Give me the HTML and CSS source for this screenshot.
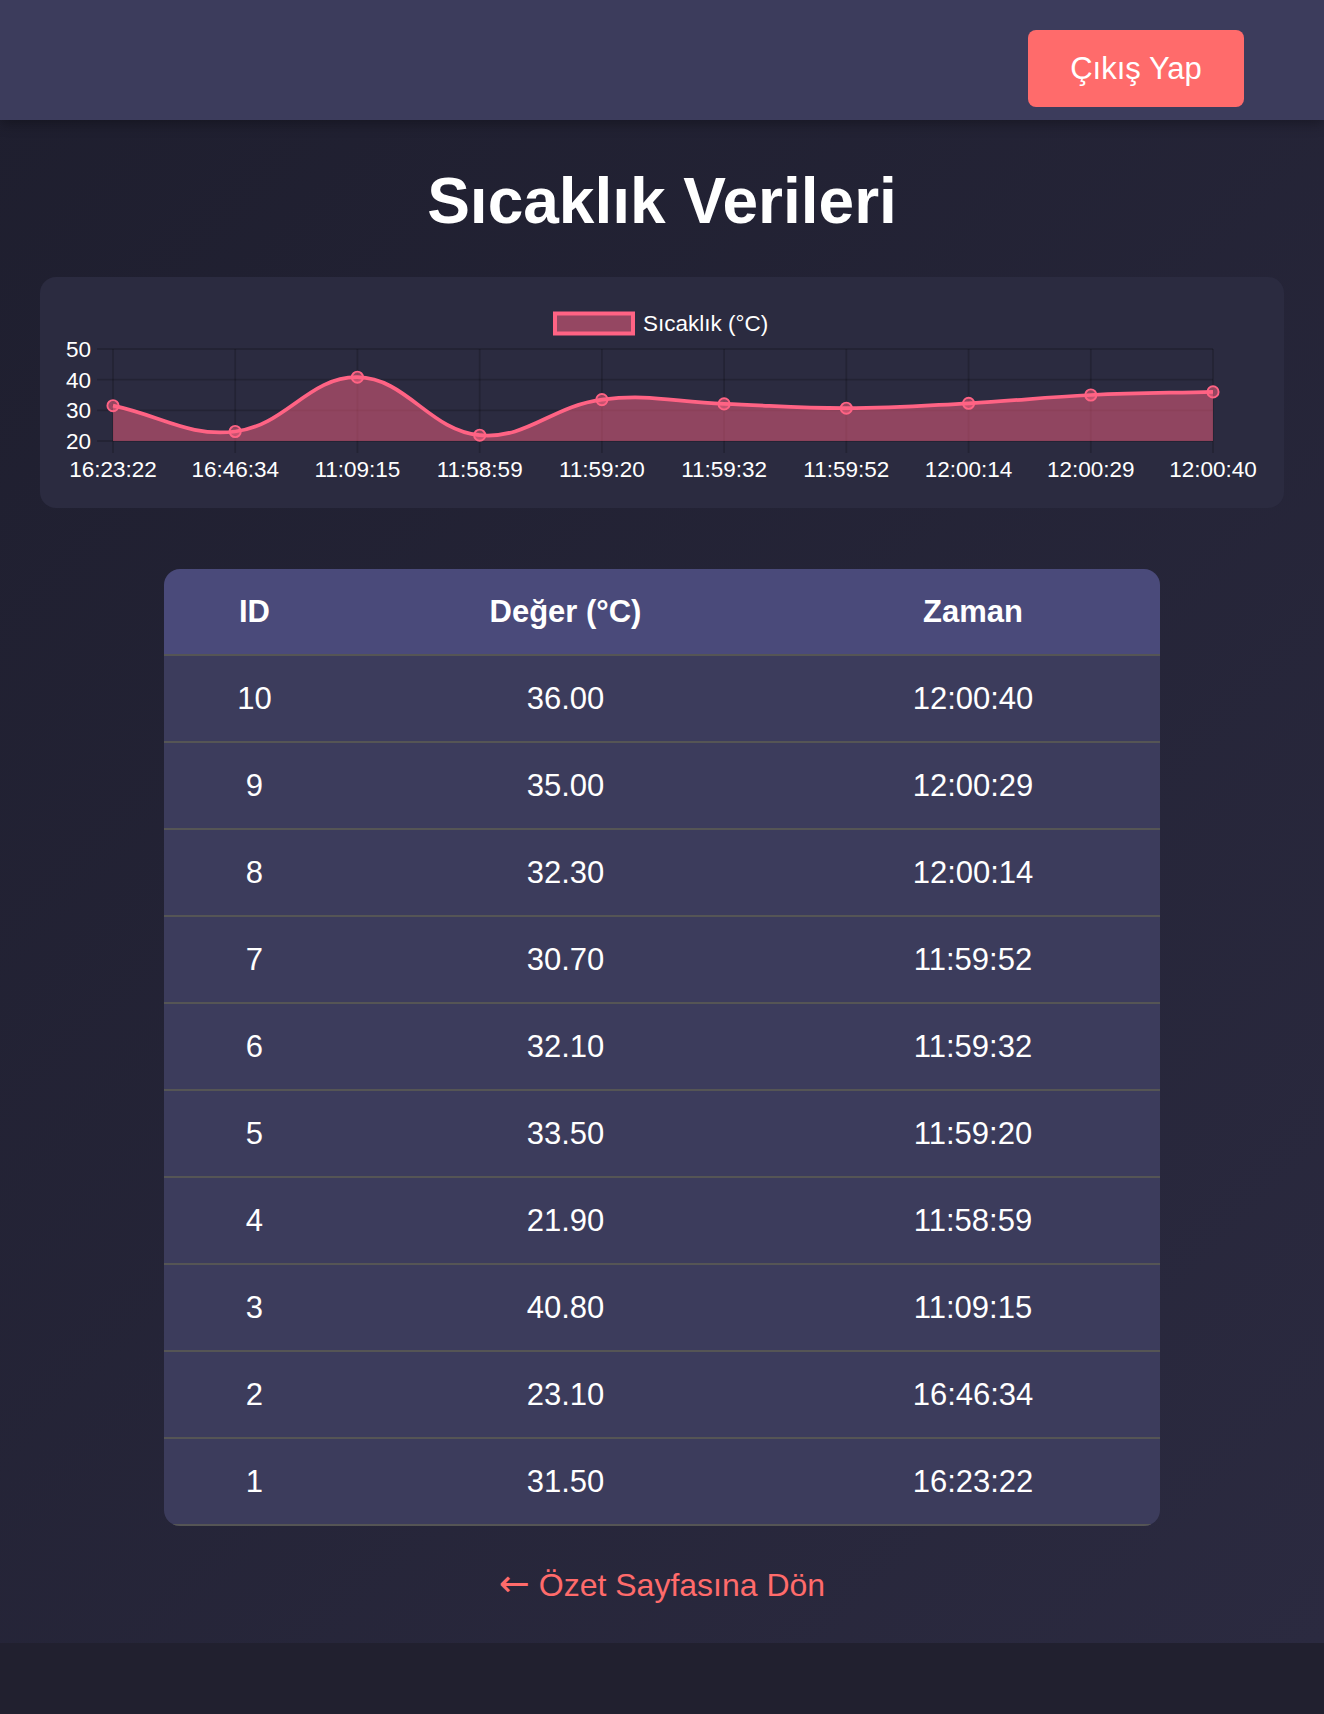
FILE: index.html
```html
<!DOCTYPE html>
<html lang="tr">
<head>
<meta charset="utf-8">
<title>Sıcaklık Verileri</title>
<link rel="stylesheet" href="styles.css">
</head>
<body>
<header class="topbar">
  <button class="logout" type="button">Çıkış Yap</button>
</header>
<main class="content">
  <h1 class="title">Sıcaklık Verileri</h1>
  <section class="chart-card">
    <svg class="chart" width="1244" height="231" viewBox="40 277 1244 231" xmlns="http://www.w3.org/2000/svg">
      <g class="grid">
        <line x1="97" y1="349" x2="1213" y2="349"/>
        <line x1="97" y1="379.7" x2="1213" y2="379.7"/>
        <line x1="97" y1="410.3" x2="1213" y2="410.3"/>
        <line x1="97" y1="441" x2="1213" y2="441"/>
        <line x1="113" y1="349" x2="113" y2="453"/>
        <line x1="235.2" y1="349" x2="235.2" y2="453"/>
        <line x1="357.4" y1="349" x2="357.4" y2="453"/>
        <line x1="479.7" y1="349" x2="479.7" y2="453"/>
        <line x1="601.9" y1="349" x2="601.9" y2="453"/>
        <line x1="724.1" y1="349" x2="724.1" y2="453"/>
        <line x1="846.3" y1="349" x2="846.3" y2="453"/>
        <line x1="968.6" y1="349" x2="968.6" y2="453"/>
        <line x1="1090.8" y1="349" x2="1090.8" y2="453"/>
        <line x1="1213" y1="349" x2="1213" y2="453"/>
      </g>
      <path class="area" d="M113,405.7 C161.9,416.0 188.0,437.0 235.2,431.5 C285.8,425.6 308.8,376.5 357.4,377.2 C406.5,377.9 429.4,430.6 479.7,435.2 C527.1,439.5 552.0,406.0 601.9,399.6 C649.8,393.5 675.2,402.2 724.1,403.9 C773.0,405.6 797.4,408.3 846.3,408.2 C895.2,408.1 919.7,405.9 968.6,403.3 C1017.5,400.7 1041.9,397.3 1090.8,395.0 C1139.7,392.7 1164.1,393.1 1213,391.9 L1213,441 L113,441 Z"/>
      <path class="line" d="M113,405.7 C161.9,416.0 188.0,437.0 235.2,431.5 C285.8,425.6 308.8,376.5 357.4,377.2 C406.5,377.9 429.4,430.6 479.7,435.2 C527.1,439.5 552.0,406.0 601.9,399.6 C649.8,393.5 675.2,402.2 724.1,403.9 C773.0,405.6 797.4,408.3 846.3,408.2 C895.2,408.1 919.7,405.9 968.6,403.3 C1017.5,400.7 1041.9,397.3 1090.8,395.0 C1139.7,392.7 1164.1,393.1 1213,391.9"/>
      <g class="points">
        <circle cx="113" cy="405.7" r="5.6"/>
        <circle cx="235.2" cy="431.5" r="5.6"/>
        <circle cx="357.4" cy="377.2" r="5.6"/>
        <circle cx="479.7" cy="435.2" r="5.6"/>
        <circle cx="601.9" cy="399.6" r="5.6"/>
        <circle cx="724.1" cy="403.9" r="5.6"/>
        <circle cx="846.3" cy="408.2" r="5.6"/>
        <circle cx="968.6" cy="403.3" r="5.6"/>
        <circle cx="1090.8" cy="395.0" r="5.6"/>
        <circle cx="1213" cy="391.9" r="5.6"/>
      </g>
      <g class="ylabels">
        <text x="91" y="357">50</text>
        <text x="91" y="387.7">40</text>
        <text x="91" y="418.3">30</text>
        <text x="91" y="449">20</text>
      </g>
      <g class="xlabels">
        <text x="113" y="477">16:23:22</text>
        <text x="235.2" y="477">16:46:34</text>
        <text x="357.4" y="477">11:09:15</text>
        <text x="479.7" y="477">11:58:59</text>
        <text x="601.9" y="477">11:59:20</text>
        <text x="724.1" y="477">11:59:32</text>
        <text x="846.3" y="477">11:59:52</text>
        <text x="968.6" y="477">12:00:14</text>
        <text x="1090.8" y="477">12:00:29</text>
        <text x="1213" y="477">12:00:40</text>
      </g>
      <rect class="legend-box" x="555" y="313.5" width="78" height="20"/>
      <text class="legend-text" x="643" y="331">Sıcaklık (°C)</text>
    </svg>
  </section>
  <div class="table-wrap">
    <table class="data-table">
      <colgroup>
        <col class="col-id">
        <col class="col-val">
        <col class="col-time">
      </colgroup>
      <thead>
        <tr><th>ID</th><th>Değer (°C)</th><th>Zaman</th></tr>
      </thead>
      <tbody>
        <tr><td>10</td><td>36.00</td><td>12:00:40</td></tr>
        <tr><td>9</td><td>35.00</td><td>12:00:29</td></tr>
        <tr><td>8</td><td>32.30</td><td>12:00:14</td></tr>
        <tr><td>7</td><td>30.70</td><td>11:59:52</td></tr>
        <tr><td>6</td><td>32.10</td><td>11:59:32</td></tr>
        <tr><td>5</td><td>33.50</td><td>11:59:20</td></tr>
        <tr><td>4</td><td>21.90</td><td>11:58:59</td></tr>
        <tr><td>3</td><td>40.80</td><td>11:09:15</td></tr>
        <tr><td>2</td><td>23.10</td><td>16:46:34</td></tr>
        <tr><td>1</td><td>31.50</td><td>16:23:22</td></tr>
      </tbody>
    </table>
  </div>
  <div class="back">
    <a class="back-link" href="#"><span class="arrow">←</span> Özet Sayfasına Dön</a>
  </div>
</main>
</body>
</html>
```

FILE: styles.css
```css
html {
  background: #21202f;
}

body {
  margin: 0;
  font-family: "Liberation Sans", Arial, Helvetica, sans-serif;
  color: #ffffff;
  background: linear-gradient(135deg, #1e1e2e 0%, #2b2a40 100%);
}

.topbar {
  height: 120px;
  box-sizing: border-box;
  display: flex;
  justify-content: flex-end;
  align-items: flex-start;
  padding: 30px 80px 0 80px;
  background: #3c3c5c;
  box-shadow: 0 4px 12px rgba(0, 0, 0, 0.3);
}

.logout {
  width: 216px;
  height: 77px;
  border: none;
  border-radius: 8px;
  background: #ff6b6b;
  color: #ffffff;
  font-family: "Liberation Sans", Arial, sans-serif;
  font-size: 31px;
  padding: 0;
  cursor: pointer;
}

.content {
  padding: 45px 40px 41px 40px;
}

.title {
  margin: 0 0 40px 0;
  font-size: 64px;
  line-height: 72px;
  font-weight: bold;
  text-align: center;
}

.chart-card {
  height: 231px;
  background: #2b2b40;
  border-radius: 16px;
}

.chart {
  display: block;
}

.grid line {
  stroke: rgba(0, 0, 0, 0.18);
  stroke-width: 1.8;
}

.area {
  fill: rgba(255, 99, 132, 0.48);
  stroke: none;
}

.line {
  fill: none;
  stroke: #ff6384;
  stroke-width: 3.75;
}

.points circle {
  fill: rgba(255, 99, 132, 0.5);
  stroke: #ff6384;
  stroke-width: 1.9;
}

.ylabels text,
.xlabels text,
.legend-text {
  fill: #ffffff;
  font-family: "Liberation Sans", Arial, sans-serif;
  font-size: 22.5px;
}

.ylabels text {
  text-anchor: end;
}

.xlabels text {
  text-anchor: middle;
}

.legend-box {
  fill: rgba(255, 99, 132, 0.5);
  stroke: #ff6384;
  stroke-width: 4;
}

.table-wrap {
  width: 80%;
  margin: 61px auto 0 auto;
  border-radius: 16px;
  overflow: hidden;
}

.data-table {
  width: 100%;
  border-collapse: separate;
  border-spacing: 0;
  table-layout: fixed;
}

.col-id {
  width: 18.1%;
}

.col-val {
  width: 44.4%;
}

.col-time {
  width: 37.5%;
}

.data-table th,
.data-table td {
  padding: 24px 0;
  line-height: 37px;
  font-size: 31px;
  text-align: center;
  border-bottom: 2px solid #555555;
}

.data-table th {
  background: #4a4a7a;
  font-weight: bold;
}

.data-table td {
  background: #3c3c5c;
  font-weight: normal;
}

.back {
  margin-top: 40px;
  text-align: center;
  font-size: 32px;
  line-height: 36px;
  height: 36px;
}

.back-link {
  color: #ff6b6b;
  text-decoration: none;
  font-size: 32px;
}

.arrow {
  font-family: "DejaVu Sans", sans-serif;
  font-size: 37px;
  line-height: 36px;
}
```
